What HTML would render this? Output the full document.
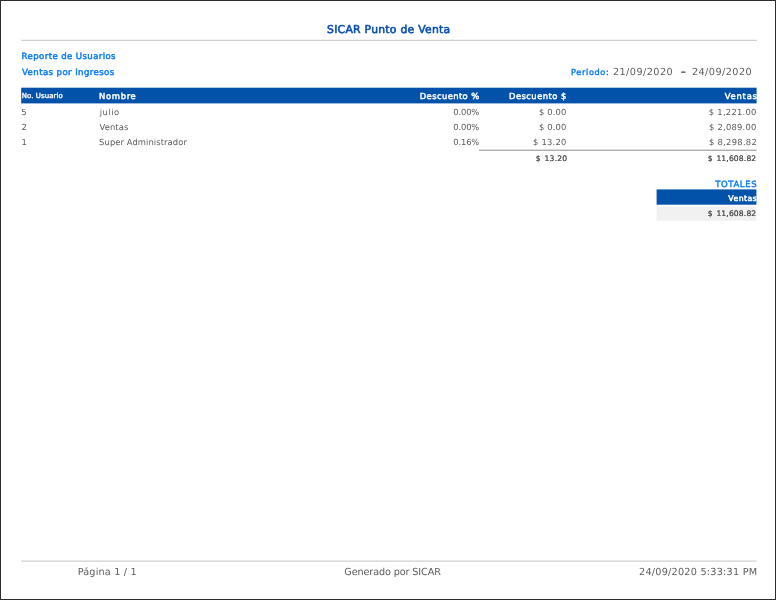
<!DOCTYPE html>
<html lang="es"><head><meta charset="utf-8"><title>SICAR Punto de Venta</title>
<style>
html,body{margin:0;padding:0;background:#fff;}
body{width:776px;height:600px;position:relative;overflow:hidden;}
#frame{position:absolute;left:0;top:0;width:776px;height:600px;box-sizing:border-box;border-style:solid;border-color:#2c2c2c;border-width:1px;}
.t{position:absolute;white-space:nowrap;line-height:1;margin:0;padding:0;text-rendering:geometricPrecision;}
.r{position:absolute;}
#page{position:absolute;left:0;top:0;width:776px;height:600px;will-change:transform;}
</style></head><body>
<div id="page">
<svg class="r" width="776" height="600" viewBox="0 0 776 600" style="left:0;top:0">
<rect x="21.2" y="39.8" width="735.6" height="1" fill="#c4c4c4"/>
<rect x="21.2" y="87.7" width="735.4" height="15.7" fill="#0252aa"/>
<rect x="479" y="149.7" width="277.6" height="1" fill="#8c8c8c"/>
<rect x="656.6" y="189.4" width="99.8" height="15.3" fill="#0252aa"/>
<rect x="656.6" y="206.4" width="99.8" height="14.3" fill="#f1f1f1"/>
<rect x="21.2" y="560.6" width="735.4" height="1" fill="#c4c4c4"/>
</svg>
<header>
<div class="t" id="title" style="font-family:'DejaVu Sans','Liberation Sans',sans-serif;font-weight:normal;-webkit-text-stroke:0.55px #064cad;font-size:10.8px;color:#064cad;top:24.96px;letter-spacing:0.271px;left:327.03px;">SICAR Punto de Venta</div>
<div class="t" id="rep" style="font-family:'DejaVu Sans','Liberation Sans',sans-serif;font-weight:normal;-webkit-text-stroke:0.45px #0a7cf8;font-size:8.6px;color:#0a7cf8;top:53.02px;letter-spacing:0.381px;left:21.61px;">Reporte de Usuarios</div>
<div class="t" id="vpi" style="font-family:'DejaVu Sans','Liberation Sans',sans-serif;font-weight:normal;-webkit-text-stroke:0.45px #0a7cf8;font-size:8.6px;color:#0a7cf8;top:69.02px;letter-spacing:0.400px;left:22.00px;">Ventas por Ingresos</div>
<div class="t" id="per" style="font-family:'DejaVu Sans','Liberation Sans',sans-serif;font-weight:normal;-webkit-text-stroke:0.4px #0a7cf8;font-size:8.2px;color:#0a7cf8;top:67.96px;letter-spacing:0.627px;left:571.05px;">Periodo:</div>
<div class="t" id="d1" style="font-family:'DejaVu Sans','Liberation Sans',sans-serif;font-weight:normal;font-size:9.7px;color:#5c5c5c;top:67.99px;letter-spacing:0.447px;left:612.89px;">21/09/2020</div>
<div class="t" id="dash" style="font-family:'DejaVu Sans','Liberation Sans',sans-serif;font-weight:normal;-webkit-text-stroke:0.5px #5c5c5c;font-size:10px;color:#5c5c5c;top:68.04px;transform:scaleX(1.3);transform-origin:0 0;left:680.75px;">-</div>
<div class="t" id="d2" style="font-family:'DejaVu Sans','Liberation Sans',sans-serif;font-weight:normal;font-size:9.7px;color:#5c5c5c;top:67.99px;letter-spacing:0.436px;left:691.92px;">24/09/2020</div>
</header>
<section class="thead">
<div class="t" id="hno" style="font-family:'DejaVu Sans','Liberation Sans',sans-serif;font-weight:normal;-webkit-text-stroke:0.35px #fff;font-size:7.0px;color:#fff;top:92.98px;letter-spacing:0.054px;left:21.74px;">No. Usuario</div>
<div class="t" id="hnom" style="font-family:'DejaVu Sans','Liberation Sans',sans-serif;font-weight:normal;-webkit-text-stroke:0.45px #fff;font-size:8.4px;color:#fff;top:91.99px;letter-spacing:0.684px;left:99.05px;">Nombre</div>
<div class="t" id="hdp" style="font-family:'DejaVu Sans','Liberation Sans',sans-serif;font-weight:normal;-webkit-text-stroke:0.45px #fff;font-size:8.4px;color:#fff;top:91.99px;letter-spacing:0.412px;right:296.40px;">Descuento %</div>
<div class="t" id="hdd" style="font-family:'DejaVu Sans','Liberation Sans',sans-serif;font-weight:normal;-webkit-text-stroke:0.45px #fff;font-size:8.4px;color:#fff;top:91.99px;letter-spacing:0.455px;right:209.27px;">Descuento $</div>
<div class="t" id="hv" style="font-family:'DejaVu Sans','Liberation Sans',sans-serif;font-weight:normal;-webkit-text-stroke:0.45px #fff;font-size:8.4px;color:#fff;top:91.99px;letter-spacing:0.791px;right:18.28px;">Ventas</div>
</section>
<section class="tbody">
<div class="t" id="r1a" style="font-family:'DejaVu Sans','Liberation Sans',sans-serif;font-weight:normal;font-size:8.4px;color:#5a5a5a;top:107.99px;left:21.27px;">5</div>
<div class="t" id="r1b" style="font-family:'DejaVu Sans','Liberation Sans',sans-serif;font-weight:normal;font-size:8.4px;color:#5a5a5a;top:107.99px;letter-spacing:0.473px;left:99.80px;">julio</div>
<div class="t" id="r1c" style="font-family:'DejaVu Sans','Liberation Sans',sans-serif;font-weight:normal;font-size:8.4px;color:#5a5a5a;top:107.99px;letter-spacing:-0.155px;right:296.87px;">0.00%</div>
<div class="t" id="r1d" style="font-family:'DejaVu Sans','Liberation Sans',sans-serif;font-weight:normal;font-size:8.4px;color:#5a5a5a;top:107.99px;letter-spacing:0.151px;right:209.53px;">$ 0.00</div>
<div class="t" id="r1e" style="font-family:'DejaVu Sans','Liberation Sans',sans-serif;font-weight:normal;font-size:8.4px;color:#5a5a5a;top:107.99px;letter-spacing:0.244px;right:19.42px;">$ 1,221.00</div>
<div class="t" id="r2a" style="font-family:'DejaVu Sans','Liberation Sans',sans-serif;font-weight:normal;font-size:8.4px;color:#5a5a5a;top:123.04px;left:21.38px;">2</div>
<div class="t" id="r2b" style="font-family:'DejaVu Sans','Liberation Sans',sans-serif;font-weight:normal;font-size:8.4px;color:#5a5a5a;top:123.04px;letter-spacing:0.108px;left:99.50px;">Ventas</div>
<div class="t" id="r2c" style="font-family:'DejaVu Sans','Liberation Sans',sans-serif;font-weight:normal;font-size:8.4px;color:#5a5a5a;top:123.04px;letter-spacing:-0.155px;right:296.87px;">0.00%</div>
<div class="t" id="r2d" style="font-family:'DejaVu Sans','Liberation Sans',sans-serif;font-weight:normal;font-size:8.4px;color:#5a5a5a;top:123.04px;letter-spacing:0.151px;right:209.53px;">$ 0.00</div>
<div class="t" id="r2e" style="font-family:'DejaVu Sans','Liberation Sans',sans-serif;font-weight:normal;font-size:8.4px;color:#5a5a5a;top:123.04px;letter-spacing:0.215px;right:19.46px;">$ 2,089.00</div>
<div class="t" id="r3a" style="font-family:'DejaVu Sans','Liberation Sans',sans-serif;font-weight:normal;font-size:8.4px;color:#5a5a5a;top:137.99px;left:21.50px;">1</div>
<div class="t" id="r3b" style="font-family:'DejaVu Sans','Liberation Sans',sans-serif;font-weight:normal;font-size:8.4px;color:#5a5a5a;top:137.99px;letter-spacing:0.080px;left:99.10px;">Super Administrador</div>
<div class="t" id="r3c" style="font-family:'DejaVu Sans','Liberation Sans',sans-serif;font-weight:normal;font-size:8.4px;color:#5a5a5a;top:137.99px;letter-spacing:-0.138px;right:296.84px;">0.16%</div>
<div class="t" id="r3d" style="font-family:'DejaVu Sans','Liberation Sans',sans-serif;font-weight:normal;font-size:8.4px;color:#5a5a5a;top:137.99px;letter-spacing:0.217px;right:209.48px;">$ 13.20</div>
<div class="t" id="r3e" style="font-family:'DejaVu Sans','Liberation Sans',sans-serif;font-weight:normal;font-size:8.4px;color:#5a5a5a;top:137.99px;letter-spacing:0.284px;right:18.91px;">$ 8,298.82</div>
</section>
<section class="totals">
<div class="t" id="t1" style="font-family:'DejaVu Sans','Liberation Sans',sans-serif;font-weight:normal;-webkit-text-stroke:0.2px #383838;font-size:7.6px;color:#383838;top:155.02px;letter-spacing:0.192px;word-spacing:1.2px;right:208.71px;">$ 13.20</div>
<div class="t" id="t2" style="font-family:'DejaVu Sans','Liberation Sans',sans-serif;font-weight:normal;-webkit-text-stroke:0.2px #383838;font-size:7.6px;color:#383838;top:155.02px;letter-spacing:0.145px;word-spacing:1.2px;right:19.68px;">$ 11,608.82</div>
<div class="t" id="tot" style="font-family:'DejaVu Sans','Liberation Sans',sans-serif;font-weight:normal;-webkit-text-stroke:0.4px #0a7cf8;font-size:8.5px;color:#0a7cf8;top:181.01px;letter-spacing:0.578px;right:18.90px;">TOTALES</div>
<div class="t" id="tv" style="font-family:'DejaVu Sans','Liberation Sans',sans-serif;font-weight:normal;-webkit-text-stroke:0.45px #fff;font-size:7.8px;color:#fff;top:195.00px;letter-spacing:0.373px;right:19.04px;">Ventas</div>
<div class="t" id="tt" style="font-family:'DejaVu Sans','Liberation Sans',sans-serif;font-weight:normal;-webkit-text-stroke:0.2px #383838;font-size:7.6px;color:#383838;top:209.97px;letter-spacing:0.145px;word-spacing:1.2px;right:19.68px;">$ 11,608.82</div>
</section>
<footer>
<div class="t" id="pg" style="font-family:'DejaVu Sans','Liberation Sans',sans-serif;font-weight:normal;font-size:9.7px;color:#5c5c5c;top:567.99px;letter-spacing:0.175px;left:77.68px;">Página 1 / 1</div>
<div class="t" id="gen" style="font-family:'DejaVu Sans','Liberation Sans',sans-serif;font-weight:normal;font-size:9.7px;color:#5c5c5c;top:568.04px;letter-spacing:-0.131px;left:344.27px;">Generado por SICAR</div>
<div class="t" id="ts" style="font-family:'DejaVu Sans','Liberation Sans',sans-serif;font-weight:normal;font-size:9.7px;color:#5c5c5c;top:567.99px;letter-spacing:0.227px;left:639.01px;">24/09/2020 5:33:31 PM</div>
</footer>
<div id="frame"></div>
</div>
</body></html>
